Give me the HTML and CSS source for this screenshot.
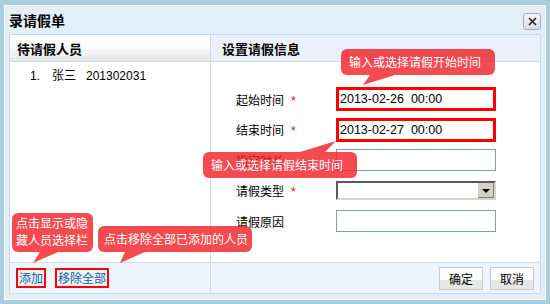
FILE: index.html
```html
<!DOCTYPE html>
<html lang="zh-CN">
<head>
  <meta charset="UTF-8">
  <title>录请假单</title>
  <link rel="stylesheet" href="styles.css">
</head>
<body>
  <div class="dialog">
    <div class="dialog-title">
      <span>录请假单</span>
      <button class="close" title="关闭">
        <svg width="9" height="9" viewBox="0 0 9 9"><path d="M1 1L8 8M8 1L1 8" stroke="#222" stroke-width="1.6"/></svg>
      </button>
    </div>
    <div class="panel">
      <div class="row head">
        <div class="cell left">待请假人员</div>
        <div class="cell right">设置请假信息</div>
      </div>
      <div class="row main">
        <div class="cell left">
          <div class="person"><span class="num">1.</span><span class="name">张三</span><span>201302031</span></div>
        </div>
        <div class="cell right form">
          <div class="field"><label>起始时间<em>*</em></label><input class="hl" value="2013-02-26  00:00"></div>
          <div class="field"><label>结束时间<em>*</em></label><input class="hl" value="2013-02-27  00:00"></div>
          <div class="field"><label>指定时长</label><input></div>
          <div class="field"><label>请假类型<em>*</em></label><div class="select"><span class="arrow"></span></div></div>
          <div class="field"><label>请假原因</label><input></div>
        </div>
      </div>
      <div class="row foot">
        <div class="cell left links"><a class="link">添加</a><a class="link">移除全部</a></div>
        <div class="cell right actions"><button class="btn">确定</button><button class="btn">取消</button></div>
      </div>
    </div>
  </div>

  <div class="tip tip-start">输入或选择请假开始时间
    <svg class="tail down" width="36" height="11"><polygon points="9,0 34,0 2,10"/></svg>
  </div>
  <div class="tip tip-end">输入或选择请假结束时间
    <svg class="tail up" width="40" height="11"><polygon points="2,11 27,11 38,0"/></svg>
  </div>
  <div class="tip tip-add">点击显示或隐<br>藏人员选择栏
    <svg class="tail down" width="30" height="11"><polygon points="9,0 27,0 2,11"/></svg>
  </div>
  <div class="tip tip-clear">点击移除全部已添加的人员
    <svg class="tail down" width="30" height="11"><polygon points="7,0 27,0 2,11"/></svg>
  </div>
</body>
</html>
```

FILE: styles.css
```css
body {
  margin: 0;
  padding: 5px 4px 0;
  height: 304px;
  box-sizing: border-box;
  background: #a9cde1;
  font-family: "Liberation Sans", "Noto Sans CJK SC", sans-serif;
  font-size: 12px;
  color: #000;
  position: relative;
  overflow: hidden;
}

.dialog {
  width: 542px;
  height: 295px;
  box-sizing: border-box;
  border: 1px solid #fff;
  background: #e3eff8;
  padding: 0 4px 5px;
  display: flex;
  flex-direction: column;
}

.dialog-title {
  height: 28px;
  display: flex;
  align-items: center;
  justify-content: space-between;
  font-family: "Noto Sans CJK SC", sans-serif;
  font-size: 14px;
  font-weight: bold;
}

.close {
  width: 18px;
  height: 17px;
  margin-top: 2px;
  padding: 0;
  border: 1px solid #9eabba;
  border-radius: 3px;
  background: linear-gradient(#f7f9fb, #d6dce4);
  display: flex;
  align-items: center;
  justify-content: center;
}

.panel {
  flex: 1;
  border: 1px solid #c5dbee;
  background: #fff;
  display: flex;
  flex-direction: column;
}

.row {
  display: flex;
}

.cell.left {
  width: 200px;
  border-right: 1px solid #c9dcee;
}

.cell.right {
  flex: 1;
}

.head {
  height: 26px;
  border-bottom: 1px solid #cbdcec;
  font-family: "Noto Sans CJK SC", sans-serif;
  font-size: 13px;
  font-weight: bold;
}

.head .cell {
  display: flex;
  align-items: center;
}

.head .left {
  padding-left: 7px;
  width: 193px;
  background: linear-gradient(#fff 35%, #e6e6e6);
}

.head .right {
  padding-left: 11px;
  background: #eaf0fa;
}

.main {
  flex: 1;
}

.person {
  padding: 6px 0 0 20px;
  line-height: 16px;
}

.person .num {
  display: inline-block;
  width: 22px;
}

.person .name {
  display: inline-block;
  width: 34px;
}

.form {
  padding-top: 22px;
}

.field {
  height: 30.5px;
  display: flex;
  align-items: center;
  padding-left: 25px;
}

.field label {
  width: 100px;
}

.field em {
  font-style: normal;
  color: #f00;
  margin-left: 7px;
}

.field input {
  width: 160px;
  height: 22px;
  box-sizing: border-box;
  margin: 0;
  border: 1px solid #7f9db9;
  padding: 0 3px;
  font-family: "Liberation Sans", sans-serif;
  font-size: 12.5px;
  color: #000;
}

.field input.hl {
  height: 24px;
  border: 3px solid #f00;
  padding: 0 1px;
}

.select {
  width: 160px;
  height: 19px;
  box-sizing: border-box;
  border: 2px solid;
  border-color: #5a5a5a #d8d4cc #d8d4cc #5a5a5a;
  background: #fff;
  display: flex;
  justify-content: flex-end;
}

.select .arrow {
  width: 16px;
  background: #d4d0c8;
  border-left: 1px solid #fff;
  box-shadow: inset -1px -1px 0 #808080;
  position: relative;
}

.select .arrow::after {
  content: "";
  position: absolute;
  left: 4px;
  top: 6px;
  border: 4px solid transparent;
  border-top: 4px solid #000;
  border-bottom: 0;
}

.foot {
  height: 30px;
  border-top: 1px solid #cbdcec;
  background: #eff3fb;
}

.foot .cell {
  display: flex;
  align-items: center;
}

.links {
  padding-left: 6px;
  width: 194px !important;
  gap: 9px;
}

.link {
  border: 2px solid #f00;
  padding: 0 1px;
  line-height: 16px;
  color: #10609f;
  font-family: "Noto Sans CJK SC", sans-serif;
}

.actions {
  justify-content: flex-end;
  padding-right: 6px;
  gap: 7px;
}

.btn {
  width: 44px;
  height: 23px;
  padding: 0;
  border: 1px solid #c9c9c9;
  background: linear-gradient(#fdfdfd 0 58%, #e6e6e6 58%);
  font-family: "Noto Sans CJK SC", sans-serif;
  font-size: 12px;
  color: #000;
}

.tip {
  position: absolute;
  box-sizing: border-box;
  background: rgba(240, 30, 36, 0.8);
  color: #fff;
  border-radius: 6px;
  font-family: "Noto Sans CJK SC", sans-serif;
  font-size: 12px;
  line-height: 26px;
  white-space: nowrap;
}

.tail {
  position: absolute;
  fill: rgba(240, 30, 36, 0.8);
}

.tail.down {
  top: 100%;
}

.tail.up {
  bottom: 100%;
}

.tip-start {
  left: 341px;
  top: 49px;
  width: 154px;
  height: 26px;
  padding-left: 8px;
}

.tip-start .tail {
  left: 20px;
}

.tip-end {
  left: 203px;
  top: 152px;
  width: 154px;
  height: 26px;
  padding-left: 8px;
}

.tip-end .tail {
  left: 95px;
}

.tip-add {
  left: 12px;
  top: 213px;
  width: 81px;
  height: 39px;
  padding: 1px 0 0 4px;
  line-height: 17px;
}

.tip-add .tail {
  left: 19px;
}

.tip-clear {
  left: 98px;
  top: 226px;
  width: 154px;
  height: 26px;
  padding-left: 6px;
}

.tip-clear .tail {
  left: 20px;
}
```
